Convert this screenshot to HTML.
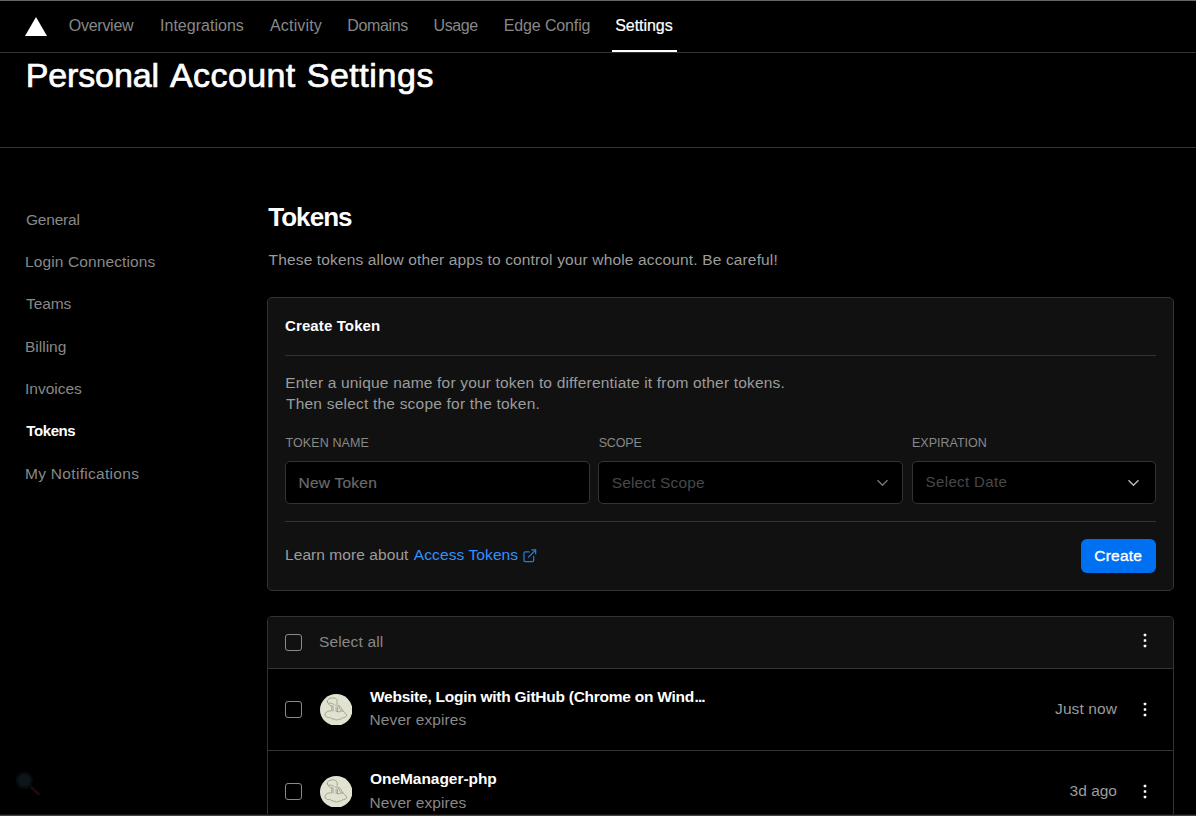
<!DOCTYPE html>
<html><head><meta charset="utf-8">
<style>
*{margin:0;padding:0;box-sizing:border-box}
html,body{width:1196px;height:816px;overflow:hidden;background:#000}
body{font-family:"Liberation Sans",sans-serif;color:#fff;position:relative}
.t{position:absolute;white-space:nowrap;line-height:1}
.nav{font-size:16px;color:#888;top:17.5px}
.side{font-size:15px;color:#888;left:26px}
.body{font-size:15.5px;color:#9c9c9c}
.ttl{top:58px;font-size:34px;letter-spacing:.3px;-webkit-text-stroke:.7px #fff}
.hr{position:absolute;height:1px;background:#333}
.box{position:absolute;border:1px solid #333;border-radius:5px}
.lbl{font-size:12.5px;color:#888;top:436.5px}
.inp{position:absolute;top:461px;height:43px;border:1px solid #333;border-radius:5px;background:#000}
.cb{position:absolute;width:17px;height:17px;border:1px solid #8a8a8a;border-radius:3px;left:285px}
.dots{position:absolute;left:1143.7px;width:4px}
.dots i{display:block;width:2.6px;height:2.6px;border-radius:.6px;background:#fff;margin-bottom:2.9px}
.av{position:absolute;left:320px;width:32.4px;height:31.7px}
</style></head><body>
<div class="hr" style="left:0;top:0;width:1196px;background:#666"></div>
<svg style="position:absolute;left:25px;top:17px" width="22" height="19" viewBox="0 0 22 19"><path d="M11 0 L22 19 L0 19 Z" fill="#fff"/></svg>
<span class="t nav" style="left:68.8px;letter-spacing:-.27px">Overview</span>
<span class="t nav" style="left:160px;letter-spacing:.02px">Integrations</span>
<span class="t nav" style="left:270px;letter-spacing:.17px">Activity</span>
<span class="t nav" style="left:347.3px;letter-spacing:-.38px">Domains</span>
<span class="t nav" style="left:433.6px;letter-spacing:-.42px">Usage</span>
<span class="t nav" style="left:503.8px;letter-spacing:-.14px">Edge Config</span>
<span class="t nav" style="left:615.2px;color:#fff;letter-spacing:-.05px;-webkit-text-stroke:.2px #fff">Settings</span>
<div class="hr" style="left:612px;top:50px;width:65px;height:2px;background:#fff"></div>
<div class="hr" style="left:0;top:52px;width:1196px"></div>
<span class="t ttl" style="left:25.7px;letter-spacing:-.12px">Personal</span>
<span class="t ttl" style="left:170px;letter-spacing:.4px">Account</span>
<span class="t ttl" style="left:306.7px;letter-spacing:.55px">Settings</span>
<div class="hr" style="left:0;top:147px;width:1196px"></div>

<span class="t side" style="top:212px;font-size:15.5px;letter-spacing:-.2px">General</span>
<span class="t side" style="top:254px;left:25px;font-size:15.5px;letter-spacing:.12px">Login Connections</span>
<span class="t side" style="top:295.5px;font-size:15.5px;letter-spacing:-.1px">Teams</span>
<span class="t side" style="top:339px;left:25px;font-size:15.5px">Billing</span>
<span class="t side" style="top:381px;left:25px;font-size:15.5px">Invoices</span>
<span class="t side" style="top:423px;left:26.3px;color:#fff;font-weight:bold;letter-spacing:-.4px">Tokens</span>
<span class="t side" style="top:466px;left:25px;font-size:15.5px;letter-spacing:.3px">My Notifications</span>

<span class="t" style="left:268.2px;top:204px;font-size:26px;font-weight:bold;letter-spacing:-.95px">Tokens</span>
<span class="t body" style="left:268.6px;top:252px;letter-spacing:.145px">These tokens allow other apps to control your whole account. Be careful!</span>

<div class="box" style="left:267px;top:297px;width:907px;height:294px;background:#111"></div>
<span class="t" style="left:285px;top:318px;font-size:15px;font-weight:bold;letter-spacing:.12px">Create Token</span>
<div class="hr" style="left:285px;top:355px;width:871px"></div>
<span class="t body" style="left:285.3px;top:375px;letter-spacing:.18px">Enter a unique name for your token to differentiate it from other tokens.</span>
<span class="t body" style="left:286px;top:396px;letter-spacing:.21px">Then select the scope for the token.</span>
<span class="t lbl" style="left:285.5px;letter-spacing:.1px">TOKEN NAME</span>
<span class="t lbl" style="left:598.7px;letter-spacing:-.15px">SCOPE</span>
<span class="t lbl" style="left:912px">EXPIRATION</span>
<div class="inp" style="left:285px;width:305px"></div>
<div class="inp" style="left:598px;width:305px"></div>
<div class="inp" style="left:912px;width:244px"></div>
<span class="t" style="left:298.6px;top:475px;font-size:15.5px;color:#6a6a6a;letter-spacing:.22px;-webkit-text-stroke:.2px #6a6a6a">New Token</span>
<span class="t" style="left:611.8px;top:475px;font-size:15.5px;color:#484848;letter-spacing:.13px">Select Scope</span>
<span class="t" style="left:925.6px;top:474.2px;font-size:15px;color:#484848;letter-spacing:.37px">Select Date</span>
<svg style="position:absolute;left:876px;top:479px" width="13" height="8" viewBox="0 0 13 8"><path d="M1.5 1.2 L6.5 6.2 L11.5 1.2" fill="none" stroke="#777" stroke-width="1.4"/></svg>
<svg style="position:absolute;left:1127.3px;top:478.6px" width="13" height="8" viewBox="0 0 13 8"><path d="M1.5 1.2 L6.5 6.2 L11.5 1.2" fill="none" stroke="#bbb" stroke-width="1.4"/></svg>
<div class="hr" style="left:285px;top:521px;width:871px"></div>
<span class="t body" id="learn" style="left:285px;top:546.8px;letter-spacing:.07px">Learn more about</span>
<span class="t body" id="access" style="left:413.8px;top:546.8px;color:#3291ff;letter-spacing:.1px">Access Tokens</span>
<svg style="position:absolute;left:522px;top:548px" width="15.6" height="15.6" viewBox="0 0 24 24" fill="none" stroke="#2b7bd6" stroke-width="1.9" stroke-linecap="round" stroke-linejoin="round"><path d="M18 13v6a2 2 0 0 1-2 2H5a2 2 0 0 1-2-2V8a2 2 0 0 1 2-2h6"/><path d="M15 3h6v6"/><path d="M10 14L21 3"/></svg>
<div style="position:absolute;left:1081px;top:539px;width:75px;height:34px;border-radius:6px;background:#0070f3"></div>
<span class="t" style="left:1094.2px;top:548px;font-size:15.5px;color:#fff;letter-spacing:.25px;-webkit-text-stroke:.35px #fff">Create</span>

<div class="box" style="left:267px;top:616px;width:907px;height:260px;background:#000;border-bottom:none;border-radius:5px 5px 0 0"></div>
<div style="position:absolute;left:268px;top:617px;width:905px;height:51px;background:#111;border-radius:4px 4px 0 0"></div>
<div class="hr" style="left:268px;top:668px;width:905px"></div>
<div class="hr" style="left:268px;top:750px;width:905px"></div>
<div class="cb" style="top:634px"></div>
<div class="cb" style="top:701px"></div>
<div class="cb" style="top:783px"></div>
<span class="t" style="left:319px;top:634px;font-size:15.5px;color:#888;letter-spacing:.15px">Select all</span>
<svg style="position:absolute;left:1140px;top:630px" width="10" height="21" viewBox="0 0 10 21" fill="#fff"><rect x="3.75" y="3.750" width="2.500" height="2.500" rx=".5"/><rect x="3.75" y="9.250" width="2.500" height="2.500" rx=".5"/><rect x="3.75" y="14.750" width="2.500" height="2.500" rx=".5"/></svg>
<svg style="position:absolute;left:1140px;top:699px" width="10" height="21" viewBox="0 0 10 21" fill="#fff"><rect x="3.75" y="3.750" width="2.500" height="2.500" rx=".5"/><rect x="3.75" y="9.250" width="2.500" height="2.500" rx=".5"/><rect x="3.75" y="14.750" width="2.500" height="2.500" rx=".5"/></svg>
<svg style="position:absolute;left:1140px;top:781px" width="10" height="21" viewBox="0 0 10 21" fill="#fff"><rect x="3.75" y="3.750" width="2.500" height="2.500" rx=".5"/><rect x="3.75" y="9.250" width="2.500" height="2.500" rx=".5"/><rect x="3.75" y="14.750" width="2.500" height="2.500" rx=".5"/></svg>
<svg class="av" style="top:693.6px" viewBox="0 0 32.4 32" preserveAspectRatio="none"><use href="#avatar"/></svg>
<svg class="av" style="top:775.7px" viewBox="0 0 32.4 32" preserveAspectRatio="none"><use href="#avatar"/></svg>
<svg width="0" height="0" style="position:absolute"><defs><g id="avatar">
<ellipse cx="16.2" cy="16" rx="16.2" ry="16" fill="#e1e3d0"/>
<g fill="none" stroke="#6c6e5c" stroke-width=".6" stroke-linecap="round" stroke-linejoin="round" opacity=".85">
<path d="M7.3 7.800C7.300 6.600 7.600 5.700 8.300 5.300 9.300 4.400 10.700 3.900 12.200 3.850c1.300 0 2.500.2 3.400.75 1 .5 1.400 1.300 1.500 2.200.1 1 0 2-.05 2.950"/>
<path d="M7.300 7.800c.1.700.3 1.300.7 1.700.9-.3 1.800-.4 2.700-.25 1.300.2 2.500.7 3.450 1.450"/>
<path d="M8.750 10.200c.3.700.8 1.200 1.450 1.500.8.300 1.650.35 2.500.25"/>
<path d="M11.700 12.700v4.400M13.150 12.700v4.400"/>
<path d="M15.600 11.200c1.200-.1 2.400.05 3.450.5.700.4 1.150.9 1.450 1.500l2.450 3.650"/>
<path d="M16.100 13.200v4.400M17.550 13.200v4.400M18.800 12.600c.4 1.600 1.100 2.900 2.200 4.100"/>
<path d="M10.700 17.100C8.500 16.600 6.200 17.800 5.600 19.400 4.600 20.600 4.900 22.600 6.600 23.200 7.800 24 9.400 24 10.200 23.600 11 25 12.800 25.600 14 25.200 15.200 26.500 18 26.500 19.200 25.300 20.600 25.600 22.200 25 22.600 23.900 24 24.200 26 23.600 26.500 22 27 20.600 26 19.600 24.900 19.400 24.600 18.200 23.400 17.200 22 17.100c-1 .2-1.900 .7-2.900 .95-.9.050-1.700-.1-2.450-.5"/>
</g></g></defs></svg>
<span class="t" style="left:370px;top:689px;font-size:15.5px;font-weight:bold;letter-spacing:-.25px">Website, Login with GitHub (Chrome on Wind</span>
<span class="t" style="left:694.5px;top:689px;font-size:15.5px;font-weight:bold;letter-spacing:-.9px">...</span>
<span class="t" style="left:369.6px;top:712px;font-size:15.5px;color:#888;letter-spacing:.08px">Never expires</span>
<span class="t" style="left:370px;top:771px;font-size:15.5px;font-weight:bold;letter-spacing:-.05px">OneManager-php</span>
<span class="t" style="left:369.6px;top:795px;font-size:15.5px;color:#888;letter-spacing:.08px">Never expires</span>
<span class="t body" style="right:79px;top:701px;letter-spacing:.1px">Just now</span>
<span class="t body" style="right:79px;top:783px">3d ago</span>
<div class="hr" style="left:0;top:814px;width:1196px;height:1px;background:#151515"></div>
<div class="hr" style="left:0;top:815px;width:1196px;height:1px;background:#404040"></div>
<svg style="position:absolute;left:10px;top:766px" width="36" height="36" viewBox="0 0 36 36"><circle cx="14.3" cy="14.3" r="8.6" fill="#070b0d"/><circle cx="14.3" cy="14.3" r="6.300" fill="#0c1519"/><path d="M21.500 21.500L28.600 28" stroke="#220909" stroke-width="2.800" stroke-linecap="round"/></svg>
</body></html>
